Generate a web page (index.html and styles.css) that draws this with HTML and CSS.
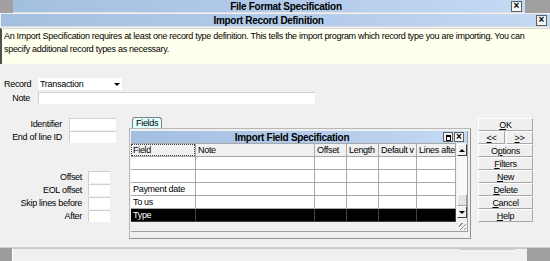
FILE: index.html
```html
<!DOCTYPE html>
<html lang="en">
  <head>
    <meta charset="UTF-8" />
    <title>File Format Specification</title>
    <link rel="stylesheet" href="styles.css">
  </head>
  <body>
    <!-- outer MDI title -->
    <div class="top-row">
      <div class="mdi-gap"></div>
      <div class="titlebar outer-title">
        <span class="title-text">File Format Specification</span>
        <span class="xbtn">&#215;</span>
      </div>
      <div class="mdi-gap right"></div>
    </div>

    <div class="dialog">
      <div class="titlebar dlg-title">
        <span class="title-text">Import Record Definition</span>
        <span class="xbtn">&#215;</span>
      </div>

      <!-- help text -->
      <div class="desc">
        An Import Specification requires at least one record type definition. This tells the import program which record type you are importing. You can specify additional record types as necessary.
      </div>

      <div class="form">
        <div class="row rec-row">
          <label class="lbl-top">Record</label>
          <div class="combo">
            <span>Transaction</span>
            <span class="combo-arrow"></span>
          </div>
        </div>
        <div class="row note-row">
          <label class="lbl-top right">Note</label>
          <div class="field note-field"></div>
        </div>

        <div class="main">
          <!-- left settings -->
          <div class="left">
            <div class="row pair">
              <label class="lbl-a">Identifier</label>
              <div class="field wide"></div>
            </div>
            <div class="row pair">
              <label class="lbl-a">End of line ID</label>
              <div class="field wide"></div>
            </div>
            <div class="lower">
              <div class="row pair">
                <label class="lbl-b">Offset</label>
                <div class="field small"></div>
              </div>
              <div class="row pair">
                <label class="lbl-b">EOL offset</label>
                <div class="field small"></div>
              </div>
              <div class="row pair">
                <label class="lbl-b">Skip lines before</label>
                <div class="field small"></div>
              </div>
              <div class="row pair">
                <label class="lbl-b">After</label>
                <div class="field small"></div>
              </div>
            </div>
          </div>

          <!-- fields tab -->
          <div class="tabs">
            <div class="tab">Fields</div>
            <div class="tab-body">
              <div class="subwin">
                <div class="titlebar sub-title">
                  <span class="title-text">Import Field Specification</span>
                  <span class="xbtn sq"></span>
                  <span class="xbtn">&#215;</span>
                </div>
                <div class="grid-wrap">
                  <table class="grid">
                    <tr class="head">
                      <td class="c-field"><span class="focus">Field</span></td>
                      <td class="c-note">Note</td>
                      <td class="c-off">Offset</td>
                      <td class="c-len">Length</td>
                      <td class="c-def">Default v</td>
                      <td class="c-lines">Lines afte</td>
                    </tr>
                    <tr><td></td><td></td><td></td><td></td><td></td><td></td></tr>
                    <tr><td></td><td></td><td></td><td></td><td></td><td></td></tr>
                    <tr><td>Payment date</td><td></td><td></td><td></td><td></td><td></td></tr>
                    <tr><td>To us</td><td></td><td></td><td></td><td></td><td></td></tr>
                    <tr class="sel"><td>Type</td><td></td><td></td><td></td><td></td><td></td></tr>
                  </table>
                  <div class="vscroll">
                    <div class="sb-btn"><span class="arr up"></span></div>
                    <div class="sb-track"></div>
                    <div class="sb-thumb"></div>
                    <div class="sb-btn"><span class="arr down"></span></div>
                  </div>
                </div>
                <div class="grip"></div>
              </div>
            </div>
          </div>

          <!-- buttons -->
          <div class="buttons">
            <div class="btn"><u>O</u>K</div>
            <div class="btn-pair">
              <div class="btn"><u>&lt;</u>&lt;</div>
              <div class="btn"><u>&gt;</u>&gt;</div>
            </div>
            <div class="btn">O<u>p</u>tions</div>
            <div class="btn"><u>F</u>ilters</div>
            <div class="btn"><u>N</u>ew</div>
            <div class="btn"><u>D</u>elete</div>
            <div class="btn"><u>C</u>ancel</div>
            <div class="btn"><u>H</u>elp</div>
          </div>
        </div>
      </div>

      <!-- status bar -->
      <div class="status">
        <div class="status-box"></div>
        <div class="status-field">
          <span class="status-mark"></span>
        </div>
        <div class="status-end"></div>
      </div>
    </div>
  </body>
</html>
```

FILE: styles.css
```css
body {
  margin: 0;
  width: 550px;
  height: 261px;
  overflow: hidden;
  background: #f0f0f0;
  font-family: "Liberation Sans", Arial, sans-serif;
  font-size: 9px;
  letter-spacing: -0.3px;
  color: #000;
}

/* title bars */
.top-row {
  display: flex;
  height: 13px;
}
.mdi-gap {
  width: 13px;
  background: #a0a0a0;
}
.mdi-gap.right {
  width: 25px;
}
.titlebar {
  display: flex;
  align-items: center;
  background: linear-gradient(to right, #a3bfe0, #b4cceb 60%, #c4daf3);
  font-weight: bold;
  font-size: 10px;
  letter-spacing: -0.3px;
}
.outer-title {
  flex: 1;
  height: 12px;
  border-bottom: 1px solid #e0e0e0;
}
.title-text {
  flex: 1;
  text-align: center;
}
.outer-title .title-text {
  padding-left: 48px;
}
.xbtn {
  width: 9px;
  height: 9px;
  margin-right: 3px;
  border: 1px solid #606060;
  background: #f4f4f4;
  font-size: 10px;
  line-height: 8px;
  letter-spacing: 0;
  text-align: center;
}
.xbtn.sq {
  position: relative;
  margin-right: 1px;
}
.xbtn.sq::after {
  content: "";
  position: absolute;
  left: 2px;
  top: 2px;
  width: 3px;
  height: 3px;
  border: 1px solid #000;
  border-top-width: 2px;
}

.dialog {
  display: flex;
  flex-direction: column;
  height: 248px;
}
.dlg-title {
  height: 12px;
  margin: 1px 0 0 1px;
  border-bottom: 1px solid #dcdcdc;
}
.desc {
  height: 34px;
  margin-top: 1px;
  padding: 1px 22px 0 2px;
  background: #ffffee;
  border-left: 2px solid #505050;
  border-top: 1px solid #d8d8d8;
  line-height: 13px;
}

/* form */
.form {
  flex: 1;
  padding-top: 14px;
}
.row {
  display: flex;
  align-items: center;
}
.lbl-top {
  width: 34px;
  padding-left: 4px;
}
.lbl-top.right {
  width: 30px;
  padding: 0 8px 0 0;
  text-align: right;
}
.combo {
  display: flex;
  align-items: center;
  justify-content: space-between;
  width: 82px;
  height: 12px;
  padding-left: 2px;
  background: #fff;
}
.combo-arrow {
  width: 0;
  height: 0;
  margin-right: 2px;
  border-left: 3px solid transparent;
  border-right: 3px solid transparent;
  border-top: 3px solid #000;
}
.note-row {
  margin-top: 2px;
}
.field {
  height: 11px;
  background: #fff;
  border-top: 1px solid #d0d0d0;
  border-left: 1px solid #d0d0d0;
}
.note-field {
  width: 276px;
}

.main {
  display: flex;
  margin-top: 13px;
}
.left {
  width: 129px;
}
.pair {
  height: 13px;
}
.lbl-a {
  width: 62px;
  text-align: right;
  margin-right: 7px;
}
.field.wide {
  width: 46px;
}
.lower {
  margin-top: 27px;
}
.lbl-b {
  width: 82px;
  text-align: right;
  margin-right: 6px;
}
.field.small {
  width: 21px;
}

/* tab control */
.tabs {
  width: 342px;
}
.tab {
  width: 25px;
  height: 10px;
  margin-left: 3px;
  padding-left: 3px;
  background: #e0ffff;
  border: 1px solid #808080;
  border-bottom: none;
  border-radius: 3px 3px 0 0;
  line-height: 10px;
}
.tab-body {
  height: 104px;
  padding: 2px 2px 3px 1px;
  border: 1px solid #b8b8b8;
  border-right-color: #909090;
  border-bottom-color: #909090;
}
.subwin {
  position: relative;
  height: 100px;
  border-bottom: 1px solid #a0a0a0;
  border-right: 1px solid #a0a0a0;
}
.sub-title {
  height: 12px;
}
.sub-title .title-text {
  padding-left: 10px;
}
.sub-title .xbtn {
  width: 8px;
  height: 8px;
  line-height: 7px;
}
.grid-wrap {
  display: flex;
}
.grid {
  border-collapse: collapse;
  width: 321px;
  table-layout: fixed;
  background: #fff;
}
.grid td {
  height: 12px;
  padding: 0 0 0 2px;
  border: 1px solid #a8a8a8;
  border-top: none;
  border-left: none;
  white-space: nowrap;
  overflow: hidden;
  line-height: 12px;
}
.grid .head td {
  background: #f0f0f0;
  border-top: 1px solid #a8a8a8;
}
.grid .head .c-field {
  padding: 0;
}
.focus {
  display: block;
  height: 10px;
  padding-left: 1px;
  line-height: 10px;
  border: 1px dotted #404040;
}
.c-field { width: 64px; }
.c-note { width: 116px; }
.c-off { width: 29px; }
.c-len { width: 29px; }
.c-def { width: 35px; }
.c-lines { width: 36px; }
.grid .sel td {
  background: #000;
  color: #fff;
  border-color: #404040;
}
.vscroll {
  display: flex;
  flex-direction: column;
  width: 11px;
  margin-left: 1px;
  padding-top: 1px;
}
.sb-btn {
  display: flex;
  align-items: center;
  justify-content: center;
  height: 10px;
  background: #f0f0f0;
  border: 1px solid #fff;
  border-right-color: #404040;
  border-bottom-color: #404040;
}
.arr {
  width: 0;
  height: 0;
  border-left: 3px solid transparent;
  border-right: 3px solid transparent;
}
.arr.up {
  border-bottom: 3px solid #000;
}
.arr.down {
  border-top: 3px solid #000;
}
.sb-track {
  height: 38px;
  background: #f7f7f7;
}
.sb-thumb {
  height: 10px;
  background: #e4e4e4;
  border: 1px solid #fff;
  border-right-color: #a0a0a0;
  border-bottom-color: #a0a0a0;
}
.grip {
  position: absolute;
  right: 1px;
  bottom: 1px;
  width: 7px;
  height: 7px;
  background: repeating-linear-gradient(135deg, transparent 0 2px, #909090 2px 3px);
}

/* command buttons */
.buttons {
  width: 55px;
  margin-left: 7px;
  margin-top: 1px;
}
.btn {
  height: 11px;
  line-height: 12px;
  text-align: center;
  background: #efefef;
  border: 1px solid #fff;
  border-right-color: #a8a8a8;
  border-bottom-color: #a8a8a8;
}
.btn-pair {
  display: flex;
  justify-content: space-between;
}
.btn-pair .btn {
  width: 25px;
}

/* status bar */
.status {
  display: flex;
  height: 13px;
  border-top: 1px solid #d0d0d0;
}
.status-box {
  width: 12px;
  background: #9c9c9c;
}
.status-field {
  flex: 1;
  display: flex;
  justify-content: flex-end;
  background: #f0f0f0;
  border-top: 1px solid #c8c8c8;
  border-left: 1px solid #fff;
}
.status-mark {
  width: 56px;
  height: 1px;
  margin-right: 12px;
  background: #d0d0d0;
}
.status-end {
  width: 23px;
  background: #a0a0a0;
}
```
